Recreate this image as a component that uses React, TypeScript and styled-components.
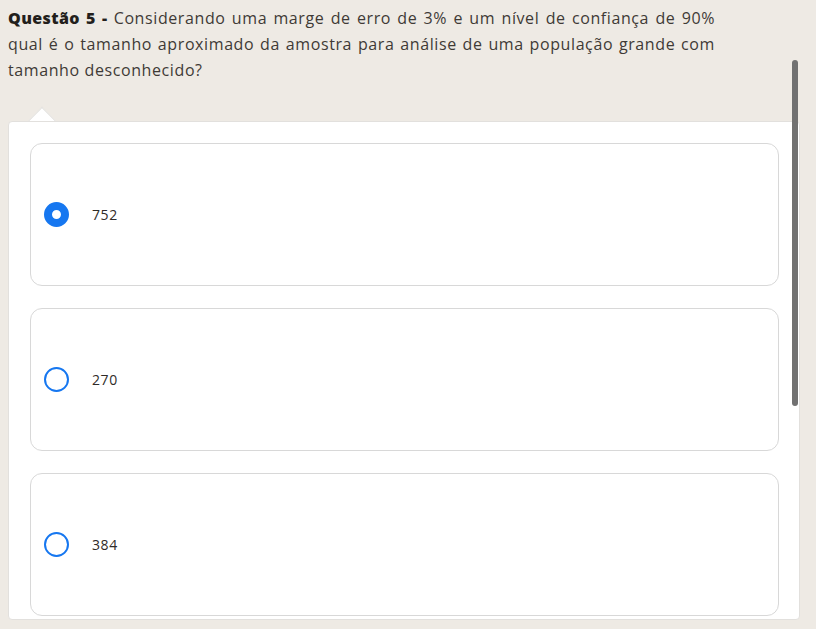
import React, { useState } from "react";
import styled, { createGlobalStyle } from "styled-components";

const Global = createGlobalStyle`
  html, body { margin: 0; padding: 0; background: #eeeae4; }
  body { font-family: "Open Sans", "Liberation Sans", sans-serif; }
  * { box-sizing: border-box; }
`;

const Page = styled.div`
  position: relative;
  width: 816px;
  height: 629px;
  overflow: hidden;
  background: #eeeae4;
`;

const Question = styled.p`
  margin: 0;
  padding: 5px 0 0 8px;
  width: 715px;
  font-size: 16px;
  line-height: 26px;
  color: #3f3a36;
  text-align: justify;
  letter-spacing: 0.6px;
`;

const Strong = styled.strong`
  font-weight: 800;
  color: #231f1c;
  letter-spacing: 0.4px;
`;

const PanelWrap = styled.div`
  position: relative;
  margin: 38px 0 0 8px;
  width: 792px;
`;

const Notch = styled.div`
  position: absolute;
  top: -10px;
  left: 24px;
  width: 20px;
  height: 20px;
  background: #fff;
  border-left: 1px solid #e2e0dd;
  border-top: 1px solid #e2e0dd;
  transform: rotate(45deg);
`;

const Panel = styled.div`
  position: relative;
  background: #fff;
  border: 1px solid #e2e0dd;
  border-radius: 4px;
  height: 499px;
  padding: 21px 20px 0 21px;
  display: flex;
  flex-direction: column;
  gap: 22px;
`;

const Card = styled.label`
  display: flex;
  align-items: center;
  height: 143px;
  flex-shrink: 0;
  border: 1px solid #d8d8d8;
  border-radius: 12px;
  padding-left: 13px;
  gap: 23px;
  cursor: pointer;
`;

const Radio = styled.span<{ $checked: boolean }>`
  width: 25px;
  height: 25px;
  border-radius: 50%;
  flex-shrink: 0;
  border: ${(p) => (p.$checked ? "8.5px" : "2px")} solid #1677f0;
  background: #fff;
`;

const Value = styled.span`
  font-size: 14px;
  color: #2f2b28;
  letter-spacing: 0.6px;
`;

const Scrollbar = styled.div`
  position: absolute;
  left: 792px;
  top: 60px;
  width: 6px;
  height: 346px;
  border-radius: 3px;
  background: #717171;
`;

const options = ["752", "270", "384"];

export default function App() {
  const [sel, setSel] = useState(0);
  return (
    <Page>
      <Global />
      <Question>
        <Strong>Questão 5 -</Strong> Considerando uma marge de erro de 3% e um nível de confiança de 90% qual é o tamanho aproximado da amostra para análise de uma população grande com tamanho desconhecido?
      </Question>
      <PanelWrap>
        <Notch />
        <Panel>
          {options.map((o, i) => (
            <Card key={o} onClick={() => setSel(i)}>
              <Radio $checked={sel === i} />
              <Value>{o}</Value>
            </Card>
          ))}
        </Panel>
      </PanelWrap>
      <Scrollbar />
    </Page>
  );
}
